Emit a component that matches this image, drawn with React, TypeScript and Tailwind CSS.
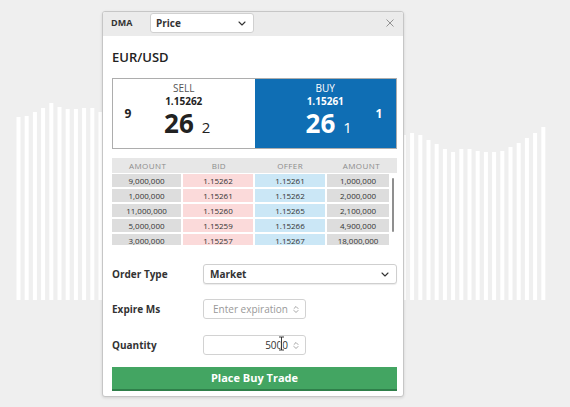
import React from 'react';

const leftTops = [117, 116, 112, 108, 103, 107, 109, 109, 108, 108, 112];
const rightTops = [135, 133, 135, 140, 144, 149, 152, 149, 149, 151, 152, 152, 151, 147, 143, 138, 133, 127];

// bar tops across the whole strip, the middle is hidden behind the ticket
const barTops: number[] = Array.from({ length: 65 }, (_, i) => {
  if (i < leftTops.length) return leftTops[i];
  if (i >= 47) return rightTops[i - 47];
  const t = (i - 10) / 37;
  return 112 + (135 - 112) * t;
});

const depth = [
  { bidAmt: '9,000,000', bid: '1.15262', offer: '1.15261', offerAmt: '1,000,000' },
  { bidAmt: '1,000,000', bid: '1.15261', offer: '1.15262', offerAmt: '2,000,000' },
  { bidAmt: '11,000,000', bid: '1.15260', offer: '1.15265', offerAmt: '2,100,000' },
  { bidAmt: '5,000,000', bid: '1.15259', offer: '1.15266', offerAmt: '4,900,000' },
  { bidAmt: '3,000,000', bid: '1.15257', offer: '1.15267', offerAmt: '18,000,000' },
];

const Chevron = () => (
  <svg width="8" height="5" viewBox="0 0 8 5" fill="none">
    <path d="M1 1l3 3 3-3" stroke="#333" strokeWidth="1.1" strokeLinecap="round" strokeLinejoin="round" />
  </svg>
);

const Spinner = () => (
  <svg width="6" height="9" viewBox="0 0 6 9" fill="none">
    <path d="M1 3.5L3 1.5l2 2M1 5.5l2 2 2-2" stroke="#9a9a9a" strokeWidth="0.9" strokeLinecap="round" strokeLinejoin="round" />
  </svg>
);

const BackgroundBars = () => (
  <svg className="absolute left-0 top-0" width="570" height="407" viewBox="0 0 570 407">
    {barTops.map((top, i) => (
      <rect key={i} x={16.5 + i * 8.2} y={top} width={4} height={300 - top} fill="#ffffff" />
    ))}
  </svg>
);

const SpinInput = ({ value, placeholder }: { value?: string; placeholder?: string }) => (
  <div className="w-[103px] h-[20px] border border-[#d2d2d2] rounded-[3px] bg-white flex items-center justify-end gap-[5px] pr-[6px]">
    {value ? (
      <span className="text-[10px] text-[#333]">{value}</span>
    ) : (
      <span className="text-[10px] text-[#999]">{placeholder}</span>
    )}
    <Spinner />
  </div>
);

export default function App() {
  return (
    <div className="relative w-[570px] h-[407px] bg-[#efefef] overflow-hidden font-['Open_Sans',sans-serif]">
      <BackgroundBars />

      <div className="relative z-10 ml-[102px] mt-[11px] w-[302px] bg-white border border-[#c6c6c6] rounded-[3px] shadow-[0_1px_3px_rgba(0,0,0,0.12)] overflow-hidden">
        {/* header */}
        <div className="h-[24px] bg-[#ebebeb] flex items-start pt-[1px] pl-[8px] pr-[9px]">
          <span className="w-[39px] text-[9px] leading-[20px] font-bold text-[#333]">DMA</span>
          <div className="w-[104px] h-[20px] bg-white border border-[#d0d0d0] rounded-[3px] flex items-center justify-between pl-[5px] pr-[7px]">
            <span className="text-[10px] font-bold text-[#333]">Price</span>
            <Chevron />
          </div>
          <svg className="ml-auto mt-[6px]" width="8" height="8" viewBox="0 0 8 8">
            <path d="M0.5 0.5l7 7M7.5 0.5l-7 7" stroke="#888" strokeWidth="0.9" />
          </svg>
        </div>

        <div className="pl-[9px] pr-[6px] pb-[5px]">
          <div className="pt-[12px] mb-[12px] h-[30px] text-[13px] leading-[18px] font-semibold text-[#222]">EUR/USD</div>

          {/* sell / buy */}
          <div className="flex h-[71px] border border-[#adadad]">
            <div className="flex-1 flex items-center bg-white">
              <div className="w-[30px] text-center text-[12px] font-bold text-[#222]">9</div>
              <div className="flex-1 self-stretch flex flex-col items-center pt-[3px]">
                <span className="text-[10px] leading-[13px] text-[#555]">SELL</span>
                <span className="text-[10px] leading-[12px] font-bold text-[#222]">1.15262</span>
                <div className="mt-[3px] pl-[7px] flex items-baseline text-[#222]">
                  <span className="text-[26px] leading-[26px] font-bold">26</span>
                  <span className="ml-[8px] text-[15px] leading-[15px]">2</span>
                </div>
              </div>
              <div className="w-[30px]" />
            </div>
            <div className="flex-1 flex items-center bg-[#0f6eb4] text-white">
              <div className="w-[34px]" />
              <div className="flex-1 self-stretch flex flex-col items-center pt-[3px]">
                <span className="text-[10px] leading-[13px]">BUY</span>
                <span className="text-[10px] leading-[12px] font-bold">1.15261</span>
                <div className="mt-[3px] pl-[7px] flex items-baseline">
                  <span className="text-[26px] leading-[26px] font-bold">26</span>
                  <span className="ml-[8px] text-[15px] leading-[15px]">1</span>
                </div>
              </div>
              <div className="w-[34px] text-center text-[12px] font-bold">1</div>
            </div>
          </div>

          {/* depth ladder */}
          <div className="mt-[9px] h-[15px] bg-[#e7e7e7] grid grid-cols-4 items-center text-center text-[8px] tracking-[0.4px] text-[#8c8c8c]">
            <span>AMOUNT</span>
            <span>BID</span>
            <span>OFFER</span>
            <span>AMOUNT</span>
          </div>
          <div className="mt-[1px] h-[71px] flex overflow-hidden">
            <div className="w-[277px] flex flex-col gap-[2px]">
              {depth.map((row) => (
                <div key={row.bid} className="h-[13px] shrink-0 grid grid-cols-[69px_70px_70px_1fr] gap-[2px] text-center text-[8px] leading-[13px] text-[#333]">
                  <span className="bg-[#dddddd]">{row.bidAmt}</span>
                  <span className="bg-[#fbdada]">{row.bid}</span>
                  <span className="bg-[#cbe7f6]">{row.offer}</span>
                  <span className="bg-[#dddddd]">{row.offerAmt}</span>
                </div>
              ))}
            </div>
            <div className="w-[8px] flex justify-center pt-[4px]">
              <div className="w-[2px] h-[54px] bg-[#8f8f8f] rounded-full" />
            </div>
          </div>

          {/* order form */}
          <div className="mt-[19px] flex items-center">
            <span className="w-[91px] text-[10px] font-bold text-[#333]">Order Type</span>
            <div className="flex-1 h-[20px] bg-white border border-[#cfcfcf] rounded-[3px] shadow-[0_1px_1px_rgba(0,0,0,0.08)] flex items-center justify-between pl-[6px] pr-[7px]">
              <span className="text-[10px] font-bold text-[#333]">Market</span>
              <Chevron />
            </div>
          </div>
          <div className="mt-[15px] flex items-center">
            <span className="w-[91px] text-[10px] font-bold text-[#333]">Expire Ms</span>
            <SpinInput placeholder="Enter expiration" />
          </div>
          <div className="mt-[16px] flex items-center">
            <span className="w-[91px] text-[10px] font-bold text-[#333]">Quantity</span>
            <div className="relative">
              <SpinInput value="5000" />
              {/* mouse I-beam cursor */}
              <svg className="absolute left-[75px] top-[1px]" width="7" height="15" viewBox="0 0 7 15">
                <path d="M1 1h2.5M3.5 1h2.5M3.5 1v13M1 14h2.5M3.5 14h2.5" stroke="#fff" strokeWidth="2.2" />
                <path d="M1 1h2.5M3.5 1h2.5M3.5 1v13M1 14h2.5M3.5 14h2.5" stroke="#222" strokeWidth="0.9" />
              </svg>
            </div>
          </div>

          <button className="mt-[12px] w-full h-[24px] bg-[#43a562] border-b-[2px] border-[#2f7f4a] text-white text-[11px] font-bold flex items-center justify-center">
            Place Buy Trade
          </button>
        </div>
      </div>
    </div>
  );
}
